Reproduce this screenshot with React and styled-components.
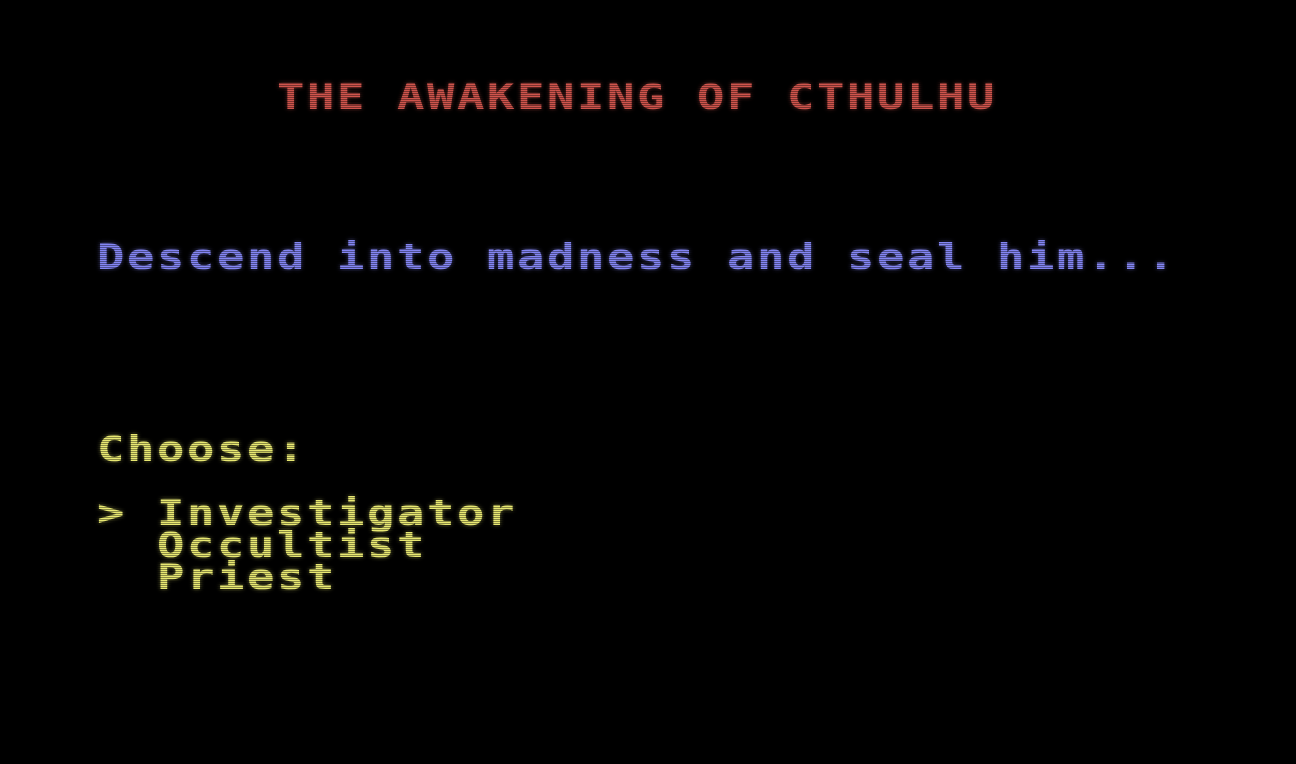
import React from "react";
import styled, { createGlobalStyle } from "styled-components";

// character cell of the text screen
const CELL_W = 30;
const CELL_H = 32;
const STRETCH = 1.3;

const GlobalStyle = createGlobalStyle`
  html, body {
    margin: 0;
    padding: 0;
    background: #000;
  }
  #root {
    min-height: 100vh;
  }
`;

const Screen = styled.div`
  position: relative;
  width: 1296px;
  height: 764px;
  overflow: hidden;
  background: #000;
  box-sizing: border-box;
  padding: 81px 0 0 97px;
  font-family: "DejaVu Sans Mono", "Liberation Mono", monospace;
  font-weight: bold;
`;

const Content = styled.div`
  display: flex;
  flex-direction: column;
  filter: blur(0.7px);
`;

const Row = styled.div`
  display: flex;
  height: ${CELL_H}px;
  padding-left: ${(p) => p.$col * CELL_W}px;
`;

const Spacer = styled.div`
  height: ${(p) => p.$rows * CELL_H}px;
`;

const Text = styled.span`
  display: inline-block;
  white-space: pre;
  font-size: 35px;
  line-height: ${CELL_H}px;
  letter-spacing: ${CELL_W / STRETCH - 35 * 0.602}px;
  color: ${(p) => p.$color};
  text-shadow: 0 0 4px ${(p) => p.$color}88;
  transform: scaleX(${STRETCH});
  transform-origin: left center;
`;

// horizontal scan lines of the monitor
const Scanlines = styled.div`
  position: absolute;
  inset: 0;
  pointer-events: none;
  background: repeating-linear-gradient(
    to bottom,
    rgba(0, 0, 0, 0) 0px,
    rgba(0, 0, 0, 0) 1px,
    rgba(0, 0, 0, 0.4) 1px,
    rgba(0, 0, 0, 0.4) 2px
  );
`;

const RED = "#cf544c";
const BLUE = "#8486f4";
const YELLOW = "#e8e872";

const classes = ["Investigator", "Occultist", "Priest"];

export default function App() {
  const selected = 0;

  return (
    <>
      <GlobalStyle />
      <Screen>
        <Content>
          <Row $col={6}>
            <Text $color={RED}>THE AWAKENING OF CTHULHU</Text>
          </Row>
          <Spacer $rows={4} />
          <Row $col={0}>
            <Text $color={BLUE}>Descend into madness and seal him...</Text>
          </Row>
          <Spacer $rows={5} />
          <Row $col={0}>
            <Text $color={YELLOW}>Choose:</Text>
          </Row>
          <Spacer $rows={1} />
          {classes.map((name, i) => (
            <Row key={name} $col={0}>
              <Text $color={YELLOW}>
                {i === selected ? "> " : "  "}
                {name}
              </Text>
            </Row>
          ))}
        </Content>
        <Scanlines />
      </Screen>
    </>
  );
}
